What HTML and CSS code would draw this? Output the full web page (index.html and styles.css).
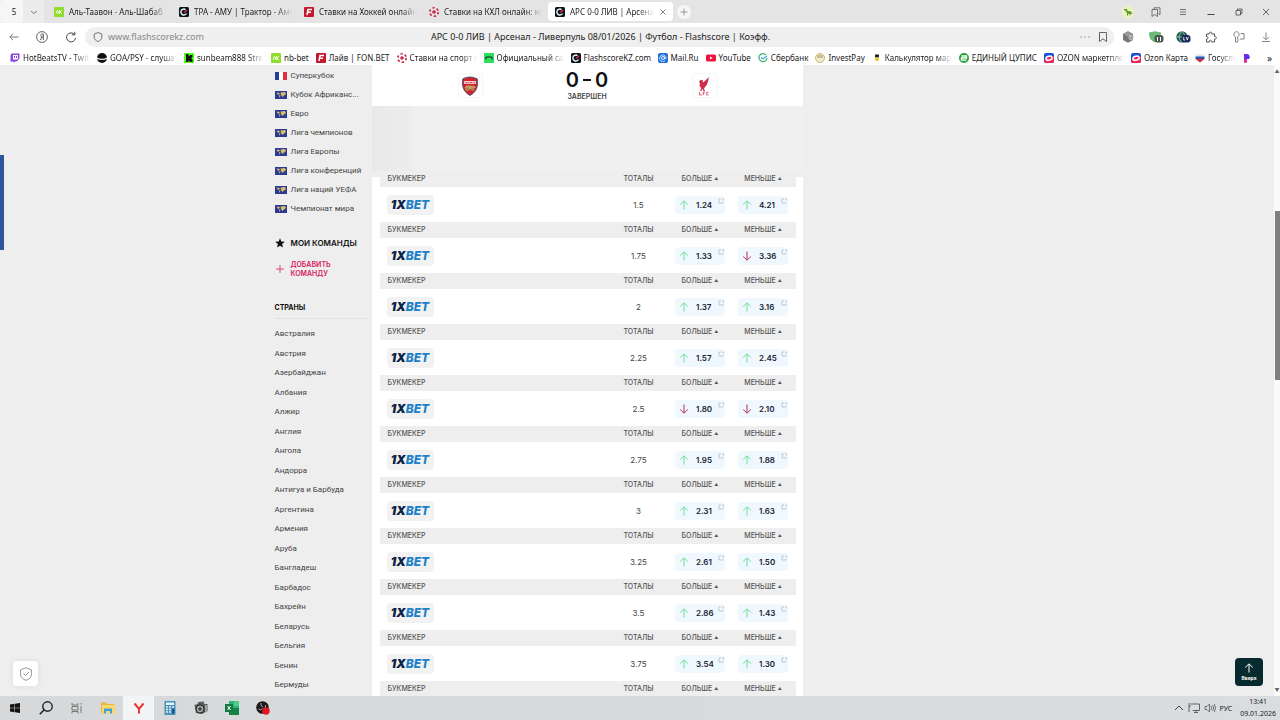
FILE: index.html
```html
<!DOCTYPE html>
<html lang="ru">
<head>
    <meta charset="UTF-8">
    <meta name="viewport" content="width=device-width, initial-scale=1.0">
    <title>АРС 0-0 ЛИВ | Арсенал - Ливерпуль 08/01/2026</title>
    <link rel="stylesheet" href="styles.css">
</head>
<body>
    <svg class="sprite" aria-hidden="true">
        <symbol id="nb" viewBox="0 0 10 10"><rect width="10" height="10" rx="1" fill="#8fdc2c"/><path d="M2 7l1.500-4L5 7M5.500 3v4M8 3L6 5l2 2" stroke="#eaffd0" fill="none"/></symbol>
        <symbol id="fs" viewBox="0 0 10 10"><rect width="10" height="10" rx="1.500" fill="#06181d"/><path d="M6.500 2.500A3 3 0 1 0 7.500 6.500" stroke="#fff" stroke-width="1.300" fill="none"/><path d="M5 5.500L8 3" stroke="#f0244f" stroke-width="1.500"/></symbol>
        <symbol id="fon" viewBox="0 0 10 10"><rect width="10" height="10" rx="1" fill="#c5172e"/><path d="M3 8l1-5.500h4M3.500 5.300h3.500" stroke="#fff" stroke-width="1.500" fill="none"/></symbol>
        <symbol id="ball" viewBox="0 0 10 10"><circle cx="5" cy="5" r="4.200" stroke="#c92742" stroke-width="1.600" stroke-dasharray="2.400 2" fill="none"/><circle cx="5" cy="5" r="1.800" fill="#c92742"/></symbol>
        <symbol id="ozon" viewBox="0 0 10 10"><rect width="10" height="10" rx="2" fill="#1750d8"/><path d="M0 7l10-4v5a2 2 0 0 1-2 2H2a2 2 0 0 1-2-2z" fill="#f0235a"/><ellipse cx="5" cy="5.200" rx="3.200" ry="2" fill="#f0235a" stroke="#fff" stroke-width="1.500" transform="rotate(-15 5 5)"/></symbol>
        <symbol id="world" viewBox="0 0 12 8"><rect width="12" height="8" fill="#2c3a92"/><path d="M1.500 1.500L5 2 4 3.500l-1 .500zM4 4l1.500.500L4.500 7zM5.500 1.500L10 1l1 2-2 1.500L7.500 6 6 4z" fill="#d7bf6b"/></symbol>
        <symbol id="up" viewBox="0 0 10 10"><path d="M5 9.500V1M1.200 4.500L5 .800l3.800 3.700" fill="none" stroke="currentColor"/></symbol>
        <symbol id="down" viewBox="0 0 10 10"><path d="M5 .500V9M1.200 5.500L5 9.200l3.800-3.700" fill="none" stroke="currentColor"/></symbol>
        <symbol id="ext" viewBox="0 0 6 6"><path d="M3 1H1v4h4V4M4 1h1.500v1.500" fill="none" stroke="currentColor" stroke-width=".7"/></symbol>
    </svg>

    <!-- Вкладки -->
    <header class="tabs">
        <div class="tab-group">
            <button class="tab-count">5</button>
            <button class="icon-btn" aria-label="Список вкладок"><svg class="s8" viewBox="0 0 8 8"><path d="M1 3l3 2.500L7 3" fill="none" stroke="#777"/></svg></button>
        </div>
        <a class="tab" href="#"><svg class="s10"><use href="#nb"/></svg><span class="fade">Аль-Таавон - Аль-Шабаб</span></a>
        <a class="tab" href="#"><svg class="s10"><use href="#fs"/></svg><span class="fade">ТРА - АМУ | Трактор - Аму</span></a>
        <a class="tab" href="#"><svg class="s10"><use href="#fon"/></svg><span class="fade">Ставки на Хоккей онлайн</span></a>
        <a class="tab" href="#"><svg class="s10"><use href="#ball"/></svg><span class="fade">Ставки на КХЛ онлайн: ко</span></a>
        <a class="tab active" href="#"><svg class="s10"><use href="#fs"/></svg><span class="fade">АРС 0-0 ЛИВ | Арсенал</span><svg class="s8" viewBox="0 0 8 8"><path d="M1.500 1.500l5 5M6.500 1.500l-5 5" stroke="#666" stroke-width=".8"/></svg></a>
        <button class="new-tab" aria-label="Новая вкладка"><svg class="s8" viewBox="0 0 8 8"><path d="M4 .500v7M.500 4h7" stroke="#888" stroke-width=".8"/></svg></button>
        <div class="tools">
            <button class="icon-btn" aria-label="Дино"><svg class="s12" viewBox="0 0 12 12"><circle cx="6" cy="6" r="6" fill="#eaf3b8"/><path d="M2 3h3l.500 2 3 .300L11 8 8.500 7.500V9.500h-1V8H6v1.500H5V7.500L3.500 4.500H2z" fill="#5a9a3c"/></svg></button>
            <button class="icon-btn" aria-label="Коллекции"><svg class="s10" viewBox="0 0 10 10"><path d="M3 2.500V.800h6v7L7.500 6.500M1 2.500h5.500v7L3.700 7.500 1 9.500z" fill="none" stroke="#555" stroke-width=".8"/></svg></button>
            <button class="icon-btn" aria-label="Меню"><svg class="s8" viewBox="0 0 8 8"><path d="M1 1.500h6M1 4h6M1 6.500h6" stroke="#555" stroke-width=".8"/></svg></button>
            <button class="icon-btn" aria-label="Свернуть"><svg class="s8" viewBox="0 0 8 8"><path d="M.500 6.500h7" stroke="#444"/></svg></button>
            <button class="icon-btn" aria-label="Восстановить"><svg class="s8" viewBox="0 0 8 8"><path d="M1 2.500h4.500v4.500H1zM2.500 2.500V1H7v4.500H5.500" fill="none" stroke="#444" stroke-width=".8"/></svg></button>
            <button class="icon-btn" aria-label="Закрыть"><svg class="s8" viewBox="0 0 8 8"><path d="M1 1l6 6M7 1L1 7" stroke="#444" stroke-width=".8"/></svg></button>
        </div>
    </header>

    <!-- Адресная строка -->
    <div class="address">
        <div class="nav">
            <button class="icon-btn" aria-label="Назад"><svg class="s10" viewBox="0 0 10 10"><path d="M9.500 5H1M4 1.800L.800 5 4 8.200" fill="none" stroke="#777"/></svg></button>
            <button class="icon-btn" aria-label="Яндекс"><svg class="s12" viewBox="0 0 12 12"><circle cx="6" cy="6" r="5.400" fill="none" stroke="#555" stroke-width=".9"/><path d="M7.300 9V3H6.300C4.300 3 4.300 6 6.300 6h1M6 6L4.300 9" fill="none" stroke="#555"/></svg></button>
            <button class="icon-btn" aria-label="Обновить"><svg class="s12" viewBox="0 0 12 12"><path d="M9.500 3.500A4.500 4.500 0 1 0 10.500 7M9.800.800v3H6.800" fill="none" stroke="#444"/></svg></button>
        </div>
        <div class="omnibox">
            <div class="url">
                <svg class="s10" viewBox="0 0 10 10"><path d="M5 .500l3.800 1.600v3C8.800 7.500 7 8.800 5 9.500 3 8.800 1.200 7.500 1.200 5.100v-3z" fill="none" stroke="#666" stroke-width=".9"/></svg>
                <input type="text" value="www.flashscorekz.com" aria-label="Адрес">
            </div>
            <div class="page-title">АРС 0-0 ЛИВ | Арсенал - Ливерпуль 08/01/2026 | Футбол - Flashscore | Коэфф.</div>
            <div class="omni-actions">
                <svg class="s10" viewBox="0 0 10 10"><path d="M.500 5h1.200M4.400 5h1.200M8.300 5h1.200" stroke="#777" stroke-width="1.200"/></svg>
                <svg class="s10" viewBox="0 0 10 10"><path d="M1.500.500h7v9L5 6.800 1.500 9.500z" fill="none" stroke="#555" stroke-width=".9"/></svg>
            </div>
        </div>
        <div class="tools">
            <button class="icon-btn" aria-label="Куб"><svg class="s12" viewBox="0 0 12 12"><path d="M6 .300l5 2.700v6l-5 2.700L1 9V3z" fill="#777"/><path d="M1 3l5 2.700L11 3 6 .300z" fill="#999"/><circle cx="9" cy="6.500" r="2.500" fill="#bbb"/><path d="M8 6.500l1 1 1.500-2" stroke="#555" fill="none" stroke-width=".7"/></svg></button>
            <button class="icon-btn" aria-label="Защита"><svg class="s16" viewBox="0 0 16 12"><path d="M1 1.500l6-1.200 6 1.200c0 5-1.500 8-6 10C2.500 9.500 1 6.500 1 1.500z" fill="#6cba78"/><rect x="6.500" y="4" width="9" height="7.500" rx="3" fill="#4b5650"/><path d="M9.500 6v4M12.500 6v4" stroke="#fff"/></svg></button>
            <button class="icon-btn" aria-label="Перевод"><svg class="s16" viewBox="0 0 16 12"><circle cx="7" cy="6" r="5.700" fill="#1e5a4a"/><path d="M1.500 6h11M7 .500c-4 4-4 7 0 11M7 .500c4 4 4 7 0 11" stroke="#9ed4c4" fill="none" stroke-width=".8"/><rect x="6.500" y="4" width="9" height="7.500" rx="3" fill="#1c2c58"/><path d="M8.700 6v3h1.500M11.300 6l1 3 1-3" stroke="#fff" fill="none" stroke-width=".8"/></svg></button>
            <button class="icon-btn" aria-label="Расширения"><svg class="s12" viewBox="0 0 12 12"><path d="M1.500 3h2.700c-.600-2.500 3.200-2.500 2.600 0h2.700v2.500c2.500-.500 2.500 3 0 2.500v3H6.500c.500-2.500-2.500-2.500-2 0h-3V8c2 .500 2-3 0-2.500z" fill="none" stroke="#444" stroke-width=".9"/></svg></button>
            <button class="icon-btn" aria-label="Пароли"><svg class="s12" viewBox="0 0 12 12"><path d="M2.500 11V6C0 5 .500.800 3.500.800S7 5 4.500 6v2l1 1-1 1v1zM7.500 2.500h3.500v5.500H6.800" fill="none" stroke="#666" stroke-width=".8"/></svg></button>
            <button class="icon-btn" aria-label="Загрузки"><svg class="s10" viewBox="0 0 10 10"><path d="M5 .500v7M2 4.800l3 3 3-3M1 9.500h8" fill="none" stroke="#777" stroke-width=".9"/></svg></button>
        </div>
    </div>

    <!-- Закладки -->
    <nav class="bookmarks">
        <a href="#"><svg class="s10" viewBox="0 0 10 10"><path d="M1.500.500h8v5l-3 3H5L3.500 10V8.500H.500v-6z" fill="#8b45e8"/><path d="M3 2h5v3.300L6.800 6.500H3z" fill="#fff"/><path d="M4.500 3v2M6.500 3v2" stroke="#8b45e8"/></svg><span class="fade">HotBeatsTV - Twitch</span></a>
        <a href="#"><svg class="s10" viewBox="0 0 10 10"><circle cx="5" cy="5" r="5" fill="#111"/><path d="M0 4.500q5 2.500 10 0v1.500q-5 2-10 0z" fill="#eee"/></svg><span class="fade">GOA/PSY - слушать</span></a>
        <a href="#"><svg class="s10" viewBox="0 0 10 10"><rect width="10" height="10" fill="#4dff1b"/><path d="M2 1h2.500v2.500L6 2h2.500v2L7 5l1.500 1.500V9H6L4.500 7v2H2z" fill="#111"/></svg><span class="fade">sunbeam888 Stream</span></a>
        <a href="#"><svg class="s10"><use href="#nb"/></svg><span>nb-bet</span></a>
        <a href="#"><svg class="s10"><use href="#fon"/></svg><span>Лайв | FON.BET</span></a>
        <a href="#"><svg class="s10"><use href="#ball"/></svg><span class="fade">Ставки на спорт он</span></a>
        <a href="#"><svg class="s10" viewBox="0 0 10 10"><rect width="10" height="10" fill="#2fe05c"/><path d="M2 6.500V4h6v2.500" stroke="#123" fill="none"/></svg><span class="fade">Официальный сайт</span></a>
        <a href="#"><svg class="s10"><use href="#fs"/></svg><span>FlashscoreKZ.com</span></a>
        <a href="#"><svg class="s10" viewBox="0 0 10 10"><rect width="10" height="10" rx="2" fill="#1c6fe0"/><circle cx="5" cy="5" r="1.500" fill="none" stroke="#fff" stroke-width=".9"/><path d="M6.500 3.500v2q1 1.500 1.700-.5A3.300 3.300 0 1 0 7 7.800" fill="none" stroke="#fff" stroke-width=".8"/></svg><span>Mail.Ru</span></a>
        <a href="#"><svg class="s10" viewBox="0 0 10 10"><rect y="1.500" width="10" height="7" rx="1.500" fill="#f0123c"/><path d="M4 3.500L6.700 5 4 6.500z" fill="#fff"/></svg><span>YouTube</span></a>
        <a href="#"><svg class="s10" viewBox="0 0 10 10"><path d="M8 2A4 4 0 1 0 9 5" fill="none" stroke="#37b56b" stroke-width="1.200"/><path d="M3 4.500l2 1.300L9 3" fill="none" stroke="#4a9de0" stroke-width="1.200"/></svg><span>Сбербанк</span></a>
        <a href="#"><svg class="s10" viewBox="0 0 10 10"><circle cx="5" cy="5" r="4.500" fill="#f1eacb" stroke="#c9b878"/><path d="M3 2v3M5 1.500v3.500M7 2v3" stroke="#a8965a"/></svg><span>InvestPay</span></a>
        <a href="#"><svg class="s10" viewBox="0 0 10 10"><path d="M3 1.500h4v3H3z" fill="#222"/><path d="M3 4.500h4L6.500 8h-3z" fill="#e4c42b"/></svg><span class="fade">Калькулятор маржи</span></a>
        <a href="#"><svg class="s10" viewBox="0 0 10 10"><circle cx="5" cy="5" r="5" fill="#2aa03c"/><path d="M2.500 3h5v2h-5v2.200h5" stroke="#fff" stroke-width="1.300" fill="none"/></svg><span>ЕДИНЫЙ ЦУПИС</span></a>
        <a href="#"><svg class="s10"><use href="#ozon"/></svg><span class="fade">OZON маркетплейс</span></a>
        <a href="#"><svg class="s10"><use href="#ozon"/></svg><span>Ozon Карта</span></a>
        <a class="short" href="#"><svg class="s10" viewBox="0 0 10 10"><path d="M.500 1h9v3h-9z" fill="#e8eaf0"/><path d="M.500 3.500h9V6h-9z" fill="#2b56b5"/><path d="M.500 6h9L5 9.500z" fill="#d8283c"/></svg><span class="fade">Госуслуги</span></a>
        <a href="#" aria-label="Закладка"><svg class="s10" viewBox="0 0 10 10"><path d="M2 1h3a3 3 0 0 1 2 5H5v3.500H2z" fill="#6b2af0"/><path d="M2 6.500h3v3H2z" fill="#f03070"/></svg></a>
        <button class="more" aria-label="Ещё">»</button>
    </nav>

    <!-- Страница -->
    <main class="viewport">
        <div class="container">
            <aside class="sidebar">
                <ul class="leagues">
                    <li><svg class="flag" viewBox="0 0 12 8"><path d="M0 0h4v8H0z" fill="#23409a"/><path d="M4 0h4v8H4z" fill="#fff"/><path d="M8 0h4v8H8z" fill="#e0323e"/></svg><a href="#">Суперкубок</a></li>
                    <li><svg class="flag"><use href="#world"/></svg><a href="#">Кубок Африканс...</a></li>
                    <li><svg class="flag"><use href="#world"/></svg><a href="#">Евро</a></li>
                    <li><svg class="flag"><use href="#world"/></svg><a href="#">Лига чемпионов</a></li>
                    <li><svg class="flag"><use href="#world"/></svg><a href="#">Лига Европы</a></li>
                    <li><svg class="flag"><use href="#world"/></svg><a href="#">Лига конференций</a></li>
                    <li><svg class="flag"><use href="#world"/></svg><a href="#">Лига наций УЕФА</a></li>
                    <li><svg class="flag"><use href="#world"/></svg><a href="#">Чемпионат мира</a></li>
                </ul>
                <h2 class="my-teams"><svg class="s10" viewBox="0 0 10 10"><path d="M5 .300l1.300 3.300 3.500.200-2.700 2.300.900 3.500L5 7.700 2 9.600l.900-3.500L.200 3.800l3.500-.200z" fill="#111"/></svg>МОИ КОМАНДЫ</h2>
                <button class="add-team"><svg class="s10" viewBox="0 0 10 10"><path d="M5 1v8M1 5h8" stroke="#d8205a" stroke-width=".8"/></svg><span>ДОБАВИТЬ<br>КОМАНДУ</span></button>
                <h2 class="countries-title">СТРАНЫ</h2>
                <ul class="countries">
                    <li><a href="#">Австралия</a></li>
                    <li><a href="#">Австрия</a></li>
                    <li><a href="#">Азербайджан</a></li>
                    <li><a href="#">Албания</a></li>
                    <li><a href="#">Алжир</a></li>
                    <li><a href="#">Англия</a></li>
                    <li><a href="#">Ангола</a></li>
                    <li><a href="#">Андорра</a></li>
                    <li><a href="#">Антигуа и Барбуда</a></li>
                    <li><a href="#">Аргентина</a></li>
                    <li><a href="#">Армения</a></li>
                    <li><a href="#">Аруба</a></li>
                    <li><a href="#">Бангладеш</a></li>
                    <li><a href="#">Барбадос</a></li>
                    <li><a href="#">Бахрейн</a></li>
                    <li><a href="#">Беларусь</a></li>
                    <li><a href="#">Бельгия</a></li>
                    <li><a href="#">Бенин</a></li>
                    <li><a href="#">Бермуды</a></li>
                </ul>
            </aside>

            <section class="match">
                <div class="score-bar">
                    <span class="crest"><svg viewBox="0 0 20 22"><path d="M2 3q8-4 16 0c1 8 0 14-8 18.500C2 17 1 11 2 3z" fill="#d3222f" stroke="#41506f" stroke-width="1"/><path d="M3.500 5.500h13v3h-13z" fill="#f4e7e4"/><path d="M5 7h2M8 7h1.500M10.500 7h2M13.500 7h1.500" stroke="#c3202c" stroke-width="1"/><path d="M4 13q1-3 5-2.500l6 .500 1.500 2-2 .500-8 2.500z" fill="#c4a270"/><circle cx="7" cy="14.500" r="2.200" fill="#ae8146"/><circle cx="13" cy="14.500" r="2" fill="#ae8146"/></svg></span>
                    <div class="score">
                        <strong>0<i></i>0</strong>
                        <span>ЗАВЕРШЕН</span>
                    </div>
                    <span class="crest"><svg viewBox="0 0 20 22"><path d="M15.500 1l-1 5-1.500 4-3 3.500 1 3h-1.500L8.500 14l-1.500 2.500H5.500L7 13.500 5 11l.500-3L4.500 6l2-2 2 .500.500 2.500L11.500 5z" fill="#cf2d4c"/><path d="M5 17.500V21h2.500M9 21v-3.300h2M9 19.300h1.500M15 18h-2v3h2" fill="none" stroke="#d9526c"/></svg></span>
                </div>
                <div class="ad"></div>
                <div class="odds" id="odds"></div>
            </section>
        </div>
        <div class="scrollbar">
            <span class="arrow">▲</span>
            <span class="thumb"></span>
            <span class="arrow">▼</span>
        </div>
        <div class="edge-panel"></div>
        <button class="shield" aria-label="Защита"><svg viewBox="0 0 14 14"><path d="M7 .800l5.500 2v4C12.500 10.500 10 12.500 7 13.300 4 12.500 1.500 10.500 1.500 6.800v-4z" fill="none" stroke="#999"/><path d="M4.500 6.500l2 2 3.500-3.500" fill="none" stroke="#999"/></svg></button>
        <button class="to-top"><svg class="s10"><use href="#up"/></svg>Вверх</button>
    </main>

    <!-- Панель задач -->
    <footer class="taskbar">
        <button class="start" aria-label="Пуск"><svg class="s10" viewBox="0 0 10 10"><path d="M0 1.500l4.500-.700v3.900H0zM5 .700L10 0v4.700H5zM0 5.300h4.500v3.900L0 8.500zM5 5.300h5V10l-5-.700z" fill="#111"/></svg></button>
        <button aria-label="Поиск"><svg class="s14" viewBox="0 0 14 14"><circle cx="8.500" cy="5.500" r="4.700" fill="none" stroke="#222" stroke-width="1.400"/><path d="M5 9L.800 13.200" stroke="#222" stroke-width="1.600"/></svg></button>
        <button aria-label="Задачи"><svg class="s12" viewBox="0 0 12 12"><path d="M1 1v2h6V1M1 4.500h6v3.500H1zM1 11.500v-2h6v2M10 1v1.500M10 4v7" fill="none" stroke="#777"/></svg></button>
        <button aria-label="Проводник"><svg class="s14" viewBox="0 0 14 14"><path d="M0 1.500h5l1 1.500h7v9H0z" fill="#e7b63c"/><path d="M1 4h13v8.500H1z" fill="#fbd768"/><path d="M3 12.500V7.500h8v5H9V10H5v2.500z" fill="#3fa3d8"/></svg></button>
        <button class="current" aria-label="Браузер"><svg class="s12" viewBox="0 0 12 12"><path d="M1.500 1.500L6 7l4.500-5.500M6 6.500v5" fill="none" stroke="#e33" stroke-width="2"/></svg></button>
        <button aria-label="Калькулятор"><svg class="s14" viewBox="0 0 14 14"><path d="M1.500 0h11v14h-11z" fill="#4b93b9"/><path d="M3 1.500h8v2.500H3z" fill="#e7f6fc"/><path d="M3 6h8M3 8.500h8M3 11h8" stroke="#e1edf3" stroke-width="1.500" stroke-dasharray="2 1"/><path d="M9 7.500h2.500v5H9z" fill="#17569b"/></svg></button>
        <button aria-label="Камера"><svg class="s14" viewBox="0 0 14 14"><path d="M.500 4l3-1 1-2 5-.500 1 2.500h3v7L8 13 2 12z" fill="#565c59"/><circle cx="6" cy="8" r="4" fill="#a5aca9" stroke="#222"/><circle cx="6" cy="8" r="1.800" fill="#30463f"/><path d="M11 4h2v6l-2 1z" fill="#9ba19f"/></svg></button>
        <button aria-label="Excel"><svg class="s14" viewBox="0 0 14 14"><path d="M4 0h10v14H4z" fill="#2fb573"/><path d="M9 0h5v5H9z" fill="#4cce8b"/><path d="M4 7h10v7H4z" fill="#178248"/><path d="M0 3h8v8H0z" fill="#137a42"/><path d="M2.500 5l3 4M5.500 5l-3 4" stroke="#fff"/></svg></button>
        <button aria-label="OBS"><svg class="s14" viewBox="0 0 14 14"><circle cx="6.500" cy="6.500" r="6.300" fill="#1c1719"/><path d="M5 2q-1 3 2 4M9.500 4q1 3-2 4M2.500 8q2 2 4-.500" stroke="#aaa" fill="none"/><circle cx="10" cy="10" r="3.700" fill="#e8151f"/></svg></button>
        <div class="tray">
            <svg class="s10" viewBox="0 0 10 10"><path d="M1 7l4-4 4 4" fill="none" stroke="#444"/></svg>
            <svg class="s12" viewBox="0 0 12 12"><path d="M2.500 2h9v6.500h-7M1 1v9M1 4h2M6 10.500h4M8 8.500v2" fill="none" stroke="#555" stroke-width=".9"/></svg>
            <svg class="s12" viewBox="0 0 12 12"><path d="M1 4.500h2L5.500 2v8L3 7.500H1zM7 4q1.500 2 0 4M8.700 3q2 3 0 6M10.300 2q2.500 4 0 8" fill="none" stroke="#555" stroke-width=".8"/></svg>
            <span>РУС</span>
            <div class="clock"><time>13:41</time><time>09.01.2026</time></div>
        </div>
    </footer>
    <script src="script.js"></script>
</body>
</html>
```
FILE: styles.css
```css
* {
    box-sizing: border-box;
}

body {
    margin: 0;
    height: 100vh;
    display: flex;
    flex-direction: column;
    overflow: hidden;
    background: #fff;
    color: #222;
    font-family: "Noto Sans", sans-serif;
    font-size: 9px;
}

button {
    border: none;
    background: none;
    padding: 0;
    font: inherit;
    color: inherit;
    cursor: pointer;
}

a {
    color: inherit;
    text-decoration: none;
}

ul {
    list-style: none;
    margin: 0;
    padding: 0;
}

svg {
    flex: none;
    display: block;
}

.sprite {
    position: absolute;
    width: 0;
    height: 0;
}

.s8 { width: 8px; height: 8px; }
.s10 { width: 10px; height: 10px; }
.s12 { width: 12px; height: 12px; }
.s14 { width: 14px; height: 14px; }
.s16 { width: 16px; height: 12px; }

.icon-btn {
    display: flex;
    align-items: center;
    justify-content: center;
    flex: 1;
}

.fade {
    flex: 1;
    overflow: hidden;
    white-space: nowrap;
    mask-image: linear-gradient(to left, transparent, #000 16px);
}

/* tabs */
.tabs {
    display: flex;
    align-items: stretch;
    height: 23px;
    flex: none;
    background: #e4e4e4;
    font-size: 8px;
}

.tab-group {
    display: flex;
    width: 44px;
    margin-right: 3px;
    background: #ececec;
}

.tab-count {
    width: 23px;
    padding-left: 5px;
    border-radius: 4px;
    background: #f6f6f6;
}

.tab {
    display: flex;
    align-items: center;
    gap: 5px;
    width: 125px;
    padding: 0 5px 0 7px;
}

.tab.active {
    height: 19px;
    margin: 2px 0 0 1px;
    padding-right: 6px;
    border-radius: 4px;
    background: #fff;
}

.new-tab {
    display: flex;
    align-items: center;
    justify-content: center;
    align-self: center;
    width: 14px;
    height: 14px;
    margin-left: 4px;
    border-radius: 50%;
    background: #f6f6f6;
}

.tools {
    display: flex;
    width: 166px;
    margin-left: auto;
}

/* address bar */
.address {
    display: flex;
    height: 27px;
    flex: none;
    align-items: center;
}

.nav {
    display: flex;
    width: 85px;
}

.omnibox {
    flex: 1;
    display: grid;
    grid-template-columns: 1fr auto 1fr;
    align-items: center;
    height: 20px;
    padding: 0 6px 0 8px;
    border-radius: 10px;
    background: #efefef;
}

.url {
    display: flex;
    align-items: center;
    gap: 5px;
}

.url input {
    flex: 1;
    min-width: 0;
    border: none;
    padding: 0;
    background: none;
    font: inherit;
    color: #888;
}

.omni-actions {
    display: flex;
    justify-content: flex-end;
    gap: 8px;
}

/* bookmarks */
.bookmarks {
    display: flex;
    align-items: center;
    gap: 7px;
    height: 15px;
    flex: none;
    padding-left: 10px;
    font-size: 8px;
}

.bookmarks a {
    display: flex;
    align-items: center;
    flex: none;
    gap: 3px;
    max-width: 80px;
    white-space: nowrap;
}

.bookmarks .short {
    width: 40px;
}

.more {
    margin: 0 8px 0 auto;
    font-size: 10px;
    line-height: 12px;
}

/* page */
.viewport {
    position: relative;
    flex: 1;
    display: flex;
    min-height: 0;
    overflow: hidden;
    background: #eee;
    font-family: Inter, sans-serif;
    font-size: 8px;
    color: #444;
}

.container {
    display: grid;
    grid-template-columns: 97px 431px;
    width: 725px;
    margin: 0 auto;
}

.sidebar {
    display: flex;
    flex-direction: column;
    min-height: 0;
    padding-top: 1px;
}

.sidebar ul {
    font-family: Roboto, sans-serif;
}

.sidebar li {
    display: flex;
    align-items: center;
    gap: 4px;
    height: 19px;
    white-space: nowrap;
}

.flag {
    width: 12px;
    height: 8px;
}

.sidebar h2 {
    margin: 0;
    font-size: 8px;
    font-weight: 600;
    line-height: 20px;
    color: #111;
}

.my-teams {
    display: flex;
    align-items: center;
    gap: 6px;
}

.sidebar .my-teams {
    margin-top: 15px;
}

.add-team {
    display: flex;
    align-items: center;
    gap: 6px;
    margin-top: 7px;
    text-align: left;
    font-size: 7px;
    font-weight: 600;
    line-height: 9px;
    color: #d8205a;
}

.sidebar .countries-title {
    margin: 20px 2px 5px 0;
    border-bottom: 1px solid #e2e2e2;
    font-size: 7px;
    font-weight: 700;
}

.countries {
    flex: 1;
    display: flex;
    flex-direction: column;
    justify-content: space-between;
    padding-bottom: 3px;
}

.match {
    background: #fff;
}

.score-bar {
    display: grid;
    grid-template-columns: 1fr 1fr 1fr;
    align-items: center;
    justify-items: center;
    height: 41px;
    padding: 0 40px;
}

.crest {
    display: flex;
    align-items: center;
    justify-content: center;
    width: 25px;
    height: 25px;
    border: 1px solid #f6f6f6;
    border-radius: 3px;
}

.crest svg {
    width: 18px;
    height: 20px;
}

.score {
    display: flex;
    flex-direction: column;
    align-items: center;
    gap: 3px;
    font-size: 7px;
    font-weight: 600;
    line-height: 8px;
}

.score strong {
    display: flex;
    align-items: center;
    gap: 4px;
    font-size: 20px;
    font-weight: 600;
    line-height: 20px;
    color: #111;
}

.score i {
    width: 8px;
    height: 2px;
    background: #111;
}

.ad {
    height: 65px;
    background: linear-gradient(to right, #e9e9e9, #ececec 36px, #f0f0f0 44px);
}

.odds {
    padding: 0 7px 0 8px;
    background: linear-gradient(#eee 6px, #fff 6px);
}

.odds table {
    width: 100%;
    table-layout: fixed;
    border-collapse: collapse;
}

.odds th {
    height: 16px;
    padding: 0;
    background: #eee;
    font-size: 7px;
    font-weight: 500;
    line-height: 8px;
    color: #555;
}

.odds th:first-child {
    padding-left: 8px;
    text-align: left;
}

.odds td {
    height: 35px;
    padding: 0;
    text-align: center;
}

.odds td:first-child {
    padding-left: 7px;
}

.col-total { width: 62px; }
.col-over { width: 61px; }
.col-under { width: 65px; }

.sort::after {
    content: "▲";
    margin-left: 2px;
    font-size: 4px;
    line-height: 4px;
    vertical-align: 1px;
}

.brand {
    display: flex;
    align-items: center;
    justify-content: center;
    width: 47px;
    height: 20px;
    border-radius: 4px;
    background: #f2f2f2;
    font-size: 12px;
    font-style: italic;
    font-weight: 800;
    color: #1b80c8;
}

.brand b {
    font-weight: 900;
    color: #0b2346;
}

.odd {
    position: relative;
    display: flex;
    align-items: center;
    gap: 7px;
    width: 50px;
    height: 18px;
    margin: 0 auto;
    padding-left: 4px;
    border-radius: 4px;
    background: #f0f8ff;
    font-weight: 600;
    color: #1a2430;
}

.odd .up { color: #6be098; }
.odd .down { color: #b8304f; }

.odd .ext {
    position: absolute;
    top: 2px;
    right: 1px;
    width: 6px;
    height: 6px;
    color: #a9b8c1;
}

.scrollbar {
    display: flex;
    flex-direction: column;
    align-items: center;
    width: 6px;
    padding: 2px 0;
    background: #fafafa;
    font-size: 5px;
    line-height: 8px;
    color: #666;
}

.thumb {
    width: 5px;
    height: 27%;
    margin-top: 136px;
    margin-bottom: auto;
    background: #7f7f7f;
}

.edge-panel {
    position: absolute;
    left: 0;
    top: 90px;
    width: 4px;
    height: 95px;
    background: #2c5699;
}

.shield,
.to-top {
    position: absolute;
    display: flex;
    flex-direction: column;
    align-items: center;
    justify-content: center;
    border-radius: 4px;
}

.shield {
    left: 13px;
    bottom: 10px;
    width: 25px;
    height: 25px;
    background: #fff;
    box-shadow: 0 0 6px rgba(0, 0, 0, 0.08);
}

.shield svg {
    width: 14px;
    height: 14px;
}

.to-top {
    right: 17px;
    bottom: 10px;
    width: 28px;
    height: 28px;
    gap: 2px;
    background: #062a2e;
    font-size: 5px;
    font-weight: 700;
    line-height: 7px;
    color: #fff;
}

/* taskbar */
.taskbar {
    display: flex;
    height: 24px;
    flex: none;
    background: linear-gradient(to right, #d6d8d9, #dadde0);
}

.taskbar button {
    display: flex;
    align-items: center;
    justify-content: center;
    width: 31px;
}

.taskbar .start {
    width: 30px;
}

.taskbar .current {
    background: #f3f4f5;
}

.tray {
    display: flex;
    align-items: center;
    gap: 4px;
    margin-left: auto;
    padding-right: 4px;
    font-size: 7px;
}

.clock {
    display: flex;
    flex-direction: column;
    align-items: center;
    margin-left: 4px;
    line-height: 12px;
}
```
FILE: script.js
```js
// [тотал, больше, направление, меньше, направление]
const rows = [
    ["1.5", "1.24", "up", "4.21", "up"],
    ["1.75", "1.33", "up", "3.36", "down"],
    ["2", "1.37", "up", "3.16", "up"],
    ["2.25", "1.57", "up", "2.45", "up"],
    ["2.5", "1.80", "down", "2.10", "down"],
    ["2.75", "1.95", "up", "1.88", "up"],
    ["3", "2.31", "up", "1.63", "up"],
    ["3.25", "2.61", "up", "1.50", "up"],
    ["3.5", "2.86", "up", "1.43", "up"],
    ["3.75", "3.54", "up", "1.30", "up"],
    null
];

function odd(value, dir) {
    return `<a class="odd" href="#"><svg class="s10 ${dir}"><use href="#${dir}"/></svg>${value}<svg class="ext"><use href="#ext"/></svg></a>`;
}

function table(row) {
    const body = row ? `<tbody><tr>
        <td><a class="brand" href="#"><b>1X</b>BET</a></td>
        <td>${row[0]}</td>
        <td>${odd(row[1], row[2])}</td>
        <td>${odd(row[3], row[4])}</td>
    </tr></tbody>` : "";
    return `<table><thead><tr>
        <th>БУКМЕКЕР</th>
        <th class="col-total">ТОТАЛЫ</th>
        <th class="col-over"><button class="sort">БОЛЬШЕ</button></th>
        <th class="col-under"><button class="sort">МЕНЬШЕ</button></th>
    </tr></thead>${body}</table>`;
}

document.getElementById("odds").innerHTML = rows.map(table).join("");
```
